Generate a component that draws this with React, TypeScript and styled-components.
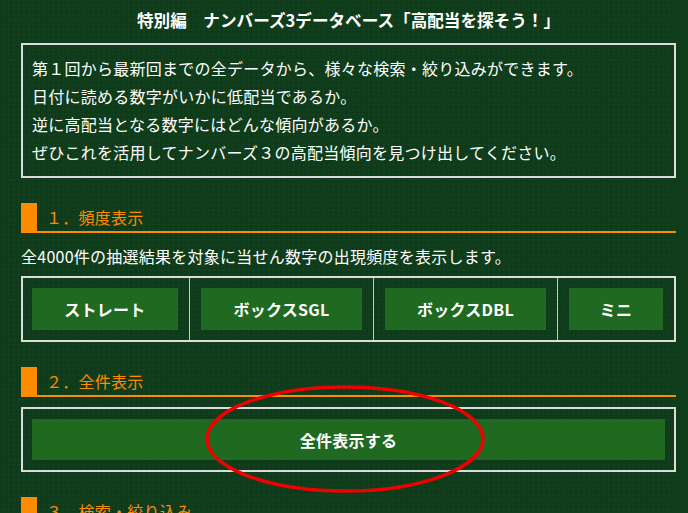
import React from 'react';
import styled, { createGlobalStyle } from 'styled-components';

const GlobalStyle = createGlobalStyle`
  html, body {
    margin: 0;
    padding: 0;
    background-color: #0f3d1b;
  }
  body {
    font-family: "Noto Sans CJK JP", "Noto Sans", sans-serif;
    color: #ffffff;
    overflow: hidden;
  }
`;

const Page = styled.div`
  width: 655px;
  padding: 6px 0 0 21px;
  box-sizing: content-box;
  background-color: #0f3d1b;
  background-image:
    radial-gradient(rgba(0, 0, 0, 0.12) 1px, transparent 1px),
    radial-gradient(rgba(255, 255, 255, 0.03) 1px, transparent 1px);
  background-size: 3px 3px, 5px 5px;
  background-position: 0 0, 1px 2px;
  min-height: 513px;
  letter-spacing: 0.25px;
`;

const Title = styled.h1`
  margin: 0 0 9px;
  font-size: 16.6px;
  line-height: 28px;
  font-weight: 700;
  text-align: center;
  color: #ffffff;
  letter-spacing: 0;
`;

const IntroBox = styled.div`
  border: 2px solid #dcdcdc;
  padding: 9px 9px 10px;
  font-size: 16px;
  line-height: 28px;
`;

const Line = styled.p`
  margin: 0;
`;

const Heading = styled.h2`
  margin: 25px 0 0;
  display: flex;
  align-items: center;
  height: 28px;
  border-bottom: 2px solid #ff8c00;
  border-left: 16px solid #ff8c00;
  padding-left: 9px;
  font-size: 16px;
  font-weight: 400;
  color: #ff8c00;
`;

const Description = styled.p`
  margin: 9px 0 6px;
  font-size: 16px;
  line-height: 28px;
`;

const ButtonTable = styled.div`
  display: grid;
  grid-template-columns: 166px 184px 184px 117px;
  border: 2px solid #dcdcdc;
`;

const Cell = styled.div<{ $first?: boolean }>`
  padding: 10px 11px 10px ${p => (p.$first ? '9px' : '11px')};
  border-left: ${p => (p.$first ? 'none' : '1px solid #c8c8c8')};
`;

const GreenButton = styled.button<{ $height?: number }>`
  display: flex;
  align-items: center;
  justify-content: center;
  width: 100%;
  height: ${p => p.$height ?? 42}px;
  margin: 0;
  border: none;
  background-color: #1f6a20;
  color: #ffffff;
  font-family: inherit;
  font-size: 16px;
  font-weight: 700;
  letter-spacing: 0.25px;
  cursor: pointer;
`;

const AllBox = styled.div`
  position: relative;
  margin-top: 10px;
  border: 2px solid #dcdcdc;
  padding: 10px 9px 10px 9px;
`;

const Highlight = styled.svg`
  position: absolute;
  left: 181px;
  top: -25px;
  pointer-events: none;
`;

const App: React.FC = () => {
  return (
    <>
      <GlobalStyle />
      <Page>
        <Title>特別編　ナンバーズ3データベース「高配当を探そう！」</Title>
        <IntroBox>
          <Line>第１回から最新回までの全データから、様々な検索・絞り込みができます。</Line>
          <Line>日付に読める数字がいかに低配当であるか。</Line>
          <Line>逆に高配当となる数字にはどんな傾向があるか。</Line>
          <Line>ぜひこれを活用してナンバーズ３の高配当傾向を見つけ出してください。</Line>
        </IntroBox>

        <Heading>１．頻度表示</Heading>
        <Description>全4000件の抽選結果を対象に当せん数字の出現頻度を表示します。</Description>
        <ButtonTable>
          <Cell $first>
            <GreenButton>ストレート</GreenButton>
          </Cell>
          <Cell>
            <GreenButton>ボックスSGL</GreenButton>
          </Cell>
          <Cell>
            <GreenButton>ボックスDBL</GreenButton>
          </Cell>
          <Cell>
            <GreenButton>ミニ</GreenButton>
          </Cell>
        </ButtonTable>

        <Heading>２．全件表示</Heading>
        <AllBox>
          <GreenButton $height={41}>全件表示する</GreenButton>
          <Highlight width="282" height="110" viewBox="0 0 282 110">
            <ellipse cx="141" cy="55" rx="138" ry="52" fill="none" stroke="#f00000" strokeWidth="3.5" />
          </Highlight>
        </AllBox>

        <Heading>３．検索・絞り込み</Heading>
      </Page>
    </>
  );
};

export default App;
